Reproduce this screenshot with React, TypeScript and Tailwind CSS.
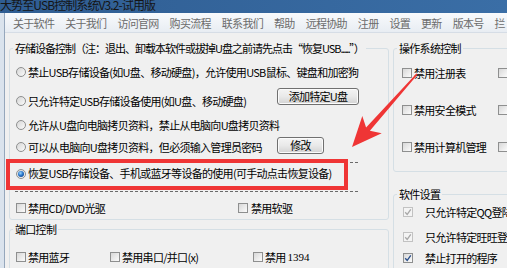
import React from 'react';

type CheckState = 'off' | 'dis' | 'on';

const Radio: React.FC<{ checked?: boolean }> = ({ checked }) => (
    <span className="w-[10px] h-[10px] shrink-0 rounded-full border border-[#8e8f8f] bg-linear-to-br from-[#d6d6d6] to-[#fbfbfb] flex items-center justify-center">
        {checked && (
            <span className="w-[6px] h-[6px] rounded-full bg-[radial-gradient(circle_at_40%_35%,#9fd8ff_0%,#2a78cc_45%,#0b2f6e_100%)]" />
        )}
    </span>
);

const Check: React.FC<{ state?: CheckState }> = ({ state = 'off' }) => {
    const dis = state === 'dis';
    return (
        <span
            className={`w-[10px] h-[10px] shrink-0 border flex items-center justify-center ${
                dis ? 'border-[#c2c2c2] bg-[#f4f4f4]' : 'border-[#8e8f8f] bg-linear-to-br from-[#d8d8d8] to-[#fbfbfb]'
            }`}
        >
            {state !== 'off' && (
                <svg width="8" height="8" viewBox="0 0 8 8">
                    <path
                        d="M1.2 4.2 L3.2 6.4 L6.8 1.4"
                        fill="none"
                        stroke={dis ? '#a8a8a8' : '#2b4f8a'}
                        strokeWidth="1.3"
                    />
                </svg>
            )}
        </span>
    );
};

const Btn: React.FC<{ w: string; children: React.ReactNode }> = ({ w, children }) => (
    <button
        className={`${w} h-[17px] shrink-0 self-start border border-[#707070] rounded-[3px] bg-linear-to-b from-[#f4f4f4] via-[#e9e9e9] to-[#d3d3d3] shadow-[inset_0_0_0_1px_#fbfbfb] text-[11px] leading-none flex items-center justify-center`}
    >
        {children}
    </button>
);

const menu = ['关于软件', '关于我们', '访问官网', '购买流程', '联系我们', '帮助', '远程协助', '注册', '设置', '更新', '版本号', '拦'];

export default function App() {
    return (
        <div className="relative w-[507px] h-[268px] overflow-hidden bg-[#f0f0f0] text-black text-[11px] tracking-[-0.7px] font-['Noto_Sans_CJK_SC','Noto_Sans',sans-serif]">
            {/* title bar */}
            <div className="h-[13px] overflow-hidden bg-linear-to-r from-[#2f5d92] to-[#3a6ea6]">
                <div className="text-[12px] leading-[12px] tracking-[-0.9px] text-[#151515] -mt-[1px] whitespace-nowrap">
                    大势至USB控制系统V3.2-试用版
                </div>
            </div>

            <div className="flex">
                <div className="w-[5px] h-[255px] shrink-0 bg-[#dae3ed] border-r border-[#95a7bc]" />
                <div className="flex-1 min-w-0">
                    {/* menu */}
                    <div className="h-[20px] pl-[8px] pt-[2px] flex items-center gap-[11px] whitespace-nowrap text-[#6b6b6b] bg-linear-to-b from-[#f8fafc] to-[#e8edf3] border-b border-[#d6dde6]">
                        {menu.map((m) => (
                            <span key={m}>{m}</span>
                        ))}
                    </div>

                    <div className="flex items-start">
                        {/* left column */}
                        <div className="ml-[4px] w-[380px] shrink-0">
                            <fieldset className="mt-[8px] pb-[1px] border border-[#d5dfe5] rounded-[3px]">
                                <legend className="ml-[3px] px-[2px] leading-[14px] whitespace-nowrap tracking-[-1px]">
                                    存储设备控制（注：退出、卸载本软件或拔掉U盘之前请先点击“恢复USB<span className="tracking-[-1.6px]">......</span>”）
                                </legend>

                                <div className="mt-[7px] h-[20px] pl-[6px] flex items-center gap-[2px] whitespace-nowrap">
                                    <Radio />
                                    禁止USB存储设备(如U盘、移动硬盘)，允许使用USB鼠标、键盘和加密狗
                                </div>

                                <div className="mt-[9px] h-[20px] pl-[6px] flex items-center gap-[2px] whitespace-nowrap">
                                    <Radio />
                                    <span className="w-[247px] shrink-0">只允许特定USB存储设备使用(如U盘、移动硬盘)</span>
                                    <span className="-mt-[3px] self-start flex">
                                        <Btn w="w-[82px]">添加特定U盘</Btn>
                                    </span>
                                </div>

                                <div className="mt-[4px] h-[20px] pl-[6px] flex items-center gap-[2px] whitespace-nowrap">
                                    <Radio />
                                    允许从U盘向电脑拷贝资料，禁止从电脑向U盘拷贝资料
                                </div>

                                <div className="mt-[2px] h-[20px] pl-[6px] flex items-center gap-[2px] whitespace-nowrap">
                                    <Radio />
                                    <span className="w-[247px] shrink-0">可以从电脑向U盘拷贝资料，但必须输入管理员密码</span>
                                    <Btn w="w-[47px]">修改</Btn>
                                </div>

                                <div className="mt-[5px] ml-[5px] w-[343px] h-[30px] pl-[1px] pb-[7px] border-y border-dashed border-[#6a6a6a] flex items-center gap-[2px] whitespace-nowrap">
                                    <Radio checked />
                                    恢复USB存储设备、手机或蓝牙等设备的使用(可手动点击恢复设备)
                                </div>

                                <div className="mt-[6px] h-[20px] pl-[6px] flex items-center whitespace-nowrap">
                                    <span className="w-[222px] flex items-center gap-[2px]">
                                        <Check />
                                        禁用CD/DVD光驱
                                    </span>
                                    <span className="flex items-center gap-[3px]">
                                        <Check />
                                        禁用软驱
                                    </span>
                                </div>
                            </fieldset>

                            <fieldset className="mt-[2px] h-[60px] border border-[#d5dfe5] rounded-[3px]">
                                <legend className="ml-[3px] px-[2px] leading-[14px]">端口控制</legend>
                                <div className="mt-[11px] h-[20px] pl-[6px] flex items-center whitespace-nowrap">
                                    <span className="w-[94px] flex items-center gap-[2px]">
                                        <Check />
                                        禁用蓝牙
                                    </span>
                                    <span className="w-[143px] flex items-center gap-[2px]">
                                        <Check />
                                        禁用串口/并口(x)
                                    </span>
                                    <span className="flex items-center gap-[2px]">
                                        <Check />
                                        禁用<span className="font-['Liberation_Serif',serif] tracking-normal">1394</span>
                                    </span>
                                </div>
                            </fieldset>
                        </div>

                        {/* right column */}
                        <div className="ml-[4px] w-[200px] shrink-0">
                            <fieldset className="mt-[8px] pb-[14px] border border-[#d5dfe5] rounded-[3px]">
                                <legend className="ml-[3px] px-[2px] leading-[14px]">操作系统控制</legend>
                                {['禁用注册表', '禁用安全模式', '禁用计算机管理'].map((t, i) => (
                                    <div
                                        key={t}
                                        className={`${i === 0 ? 'mt-[8px]' : 'mt-[17px]'} h-[20px] pl-[8px] flex items-center whitespace-nowrap`}
                                    >
                                        <span className="w-[96px] flex items-center gap-[2px]">
                                            <Check />
                                            {t}
                                        </span>
                                        <Check />
                                    </div>
                                ))}
                            </fieldset>

                            <fieldset className="mt-[15px] h-[90px] border border-[#d5dfe5] rounded-[3px]">
                                <legend className="ml-[3px] px-[2px] leading-[14px]">软件设置</legend>
                                <div className="mt-[1px] h-[20px] pl-[9px] flex items-center gap-[12px] whitespace-nowrap">
                                    <Check state="dis" />
                                    只允许特定QQ登陆
                                </div>
                                <div className="mt-[5px] h-[20px] pl-[9px] flex items-center gap-[12px] whitespace-nowrap">
                                    <Check state="dis" />
                                    只允许特定旺旺登陆
                                </div>
                                <div className="mt-[1px] h-[20px] pl-[9px] flex items-center gap-[12px] whitespace-nowrap">
                                    <Check state="on" />
                                    禁止打开的程序
                                </div>
                            </fieldset>
                        </div>
                    </div>
                </div>
            </div>

            {/* annotation overlays */}
            <div className="absolute left-[6px] top-[159px] w-[342px] h-[31px] border-[4px] border-[#ef3535] pointer-events-none" />
            <svg className="absolute left-0 top-0 pointer-events-none" width="507" height="268" viewBox="0 0 507 268">
                <polygon
                    points="416.4,73.5 366.1,127.4 362.3,116 352,147 381.7,133.2 369.9,130.8 417.6,74.5"
                    fill="#ef3535"
                />
            </svg>
        </div>
    );
}
